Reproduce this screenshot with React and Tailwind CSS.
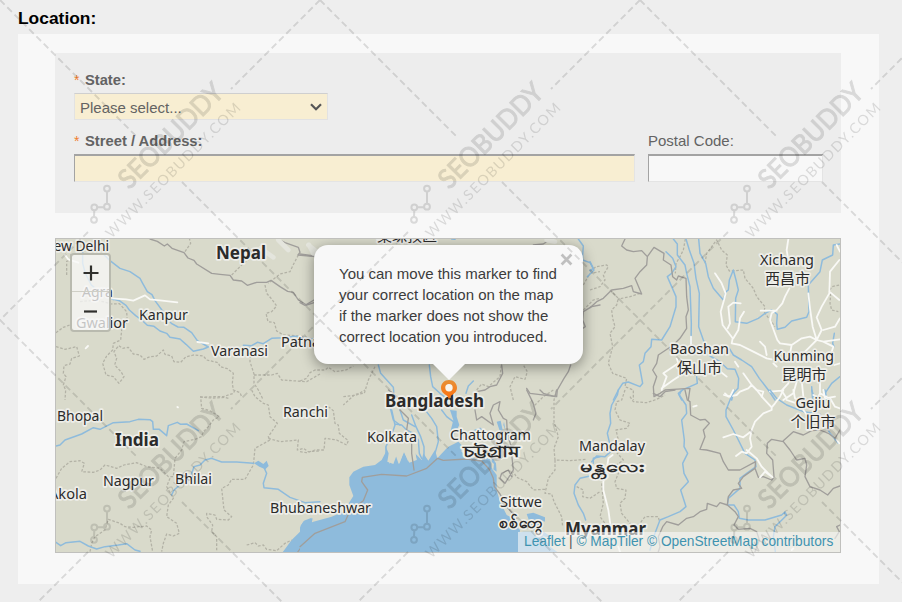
import React from "react";

const LABEL_FONT = '"Noto Sans", "Noto Sans CJK SC", sans-serif';

// [text, x, width, baseline, size, weight]
const LABELS = [
  ["New Delhi", 43, 66, 250.5, 15, 400],
  ["Agra", 82, 31, 297, 15, 400],
  ["Gwalior", 76, 52, 328, 15, 400],
  ["Kanpur", 139, 49, 320, 15, 400],
  ["Varanasi", 211, 57, 355.5, 15, 400],
  ["Patna", 281, 39, 347, 15, 400],
  ["Nepal", 216, 50, 258.5, 17.5, 700],
  ["Bhopal", 57, 46, 420.5, 15, 400],
  ["India", 115, 44, 446, 17.5, 700],
  ["Nagpur", 103, 51, 485.5, 15, 400],
  ["Bhilai", 175, 37, 483.5, 15, 400],
  ["Akola", 49, 38, 498.5, 15, 400],
  ["Ranchi", 283, 45, 417, 15, 400],
  ["Bhubaneshwar", 270, 101, 512.5, 15, 400],
  ["Kolkata", 367, 50, 441.5, 15, 400],
  ["Chattogram", 450, 81, 440.3, 15, 400],
  ["চট্টগ্রাম", 463, 56, 457, 15, 600],
  ["Bangladesh", 385, 99, 407, 17.5, 700],
  ["Sittwe", 500, 42, 506.8, 15, 400],
  ["စစ်တွေ", 499, 45, 528, 16, 600],
  ["Mandalay", 579, 66, 451.2, 15, 400],
  ["မန္တလေး", 580, 64, 472, 16, 600],
  ["Myanmar", 565, 81, 535, 17.5, 700],
  ["Xichang", 760, 54, 265, 15, 400],
  ["西昌市", 765, 45, 284, 15, 400],
  ["Baoshan", 670, 59, 353.5, 15, 400],
  ["保山市", 677, 45, 372.5, 15, 400],
  ["Kunming", 773.5, 60.5, 361, 15, 400],
  ["昆明市", 781.5, 45, 380, 15, 400],
  ["Gejiu", 795.5, 35, 408, 15, 400],
  ["个旧市", 790.5, 45, 427, 15, 400],
  ["桑珠孜区", 377, 60, 241, 15, 400],
];

const RIVER = "#8ebbdc";
const STATE = "#b3b2a6";
const BORDER = "#a09e9b";

// One sheet of the map, drawn on a grid three times finer than the page.
function Sheet({ x, y, water, rivers, states, borders, roads, wideRoads, children }) {
  return (
    <g
      transform={`translate(${x} ${y}) scale(0.33333)`}
      fill="none"
      strokeLinejoin="round"
      strokeLinecap="round"
    >
      {water && <path d={water} fill={RIVER} />}
      {children}
      {states && <path d={states} stroke={STATE} strokeWidth="3.8" strokeDasharray="8 5" strokeLinecap="butt" />}
      {rivers && <path d={rivers} stroke={RIVER} strokeWidth="4.4" />}
      {borders && <path d={borders} stroke={BORDER} strokeWidth="4" />}
      {roads && <path d={roads} stroke="#f9f9f6" strokeWidth="5.4" />}
      {wideRoads && <path d={wideRoads} stroke="#e4e5dd" strokeWidth="14" />}
    </g>
  );
}

function MapDrawing() {
  return (
    <svg className="block h-full w-full" viewBox="56 239 784 313">
      <rect x="56" y="239" width="784" height="313" fill="#d9dacb" />

      <Sheet
        x={50}
        y={230}
        rivers="M160 72 L180 92 L210 115 L240 125 L270 145 L278 160 L292 185 L306 194 L315 212 L340 246 L364 280 L384 291 L402 292 L425 308 L442 332 L475 351 M180 205 L208 212 L228 226 L238 240 L257 257 L275 270 L292 286 L312 289 L330 303 L350 310 L360 322 L390 327 L408 343 L430 364 L460 357 L475 351 M580 346 L605 347 L622 337 L640 341 L665 325 L700 323 L735 319 L790 327 M98 65 L98 100 L106 130 L124 165 L155 190 L190 209"
        states="M50 135 L50 94 L65 88 L62 70 M18 308 L40 292 L62 284 M90 215 L140 210 L185 222 L208 221 L230 245 L232 275 L215 300 L212 330 L190 340 L188 360 L170 378 L158 400 L168 435 L190 440 L207 460 L222 440 L213 425 L194 405 L200 385 L192 365 L206 347 L218 355 L235 352 L250 372 L270 375 L282 388 L300 380 L320 378 L340 360 L345 373 L365 378 L372 395 L392 397 L407 381 L430 375 L460 378 L470 390 L505 398 L510 410 L532 416 L550 430 L547 460 L550 480 L570 488 L575 500 M450 500 L470 503 L490 504 L525 502 L540 507 M18 350 L45 358 L80 350 L88 378 L65 385 L60 402 L42 407 L40 430 L48 440 L40 465 L47 480 L45 510 M600 350 L600 395 L612 432 L612 460 L625 480 L640 510 M612 435 L665 435 L682 430 L695 450 L770 455 L810 432 M645 165 L650 190 L665 207 L680 228 L665 245 L648 250 L654 275 L673 278 L680 303 L700 315 L735 317 L770 320 M545 135 L575 105 L600 85 L632 88 M405 65 L422 40 L418 25 M745 75 L732 100 L720 125 L690 132 L655 160"
        borders="M300 27 L322 34 L343 48 L352 42 L366 55 L402 68 L414 84 L432 91 L440 102 L485 130 L510 133 L540 136 L550 150 L575 153 L592 166 L620 157 L650 157 L663 151 L690 170 L713 184 L730 187 L745 210 L770 225 L792 218 M683 27 L705 38 L745 52 L750 67 L744 75 L795 80"
        roads="M185 205 L228 208 L250 212 L285 196 L300 208 L330 211 L382 217 M442 336 L475 340 M45 75 L55 88 L85 98 M107 355 L114 348"
        wideRoads="M632 55 L670 82 M685 30 L715 60 M775 45 L800 65"
      />

      <Sheet
        x={300}
        y={230}
        rivers="M235 405 L242 430 L280 472 L282 495 L270 530 L280 570 L300 585 M388 405 L392 440 L398 470 L420 490 L445 510 L460 525 M498 490 L505 468 L520 453 M835 27 L850 48 L848 75 L848 90 L870 98 L882 120 L862 140 M455 27 L465 28"
        states="M0 453 L20 445 L30 428 L45 420 L75 420 L85 412 L105 425 L138 420 L160 408 M225 410 L205 450 L193 490 L165 493 L130 525 M530 480 L545 462 L565 470 L600 440 L604 405 M640 510 L630 470 L645 440 L675 448 L682 425 L670 405 M760 480 L730 500 L700 530 M850 240 L880 210 L900 205 M850 165 L870 130 L900 125"
        borders="M0 218 L15 226 L42 210 M0 72 L42 78 M605 405 L608 430 L590 465 L570 470 L555 480 L530 485 L530 510 M680 475 L690 490 L770 500 L772 480 L792 445 L805 425 L812 405 M848 295 L856 290 L848 270 L850 245 L875 230 L900 225 M700 45 L730 42 L750 28"
        wideRoads="M27 45 L40 70 M740 30 L765 35"
      />

      <Sheet
        x={590}
        y={230}
        rivers="M250 27 L262 42 L262 75 L285 105 L290 130 L300 170 L304 280 L303 340 M288 27 L298 60 L312 100 L318 145 L328 190 L326 290 L340 330 L360 378 L390 395 L412 416 L435 418 L446 445 L444 475 L430 490 L425 510 M326 27 L330 70 L347 100 L355 140 L370 175 L400 210 L408 185 L415 180 L418 150 L430 120 L438 150 L445 180 L437 205 L436 275 L470 280 L505 265 L525 250 L545 240 L562 253 L560 280 L562 298 L585 292 L605 273 L650 262 L657 245 L655 165 L690 125 L697 90 L728 75 L730 45 L750 42 M228 65 L248 85 L258 110 L245 130 L232 140 L258 200 L258 230 L240 290 L215 330 L185 328 L183 350 L165 370 L160 395 L148 405 L158 460 L150 470 L115 456 L98 460 L85 480 L70 510 M418 355 L430 375 L455 390 L485 410 L508 445 L535 480 L555 510 M320 440 L322 460 L300 470 L280 478 L265 490 L275 510 M733 310 L728 340 L732 350 M665 470 L668 510 M750 440 L725 460 L705 490 L710 510 M0 95 L10 115 L0 122"
        states="M0 180 L30 170 L45 150 L40 135 L55 110 L50 105 L18 110 L0 125 M60 180 L85 205 L80 225 L65 240 L68 265 L75 290 L60 310 L68 350 L60 380 L55 400 L68 430 L110 445 L105 470 L130 480 L130 510 M150 190 L120 200 L85 207 M286 27 L280 60 L270 80 L258 100 L256 130 M345 100 L350 70 L380 30 L395 60 L412 75 L408 105 L418 123 L460 120 L465 145 L490 175 L500 200 L525 230 L522 245 L540 270 L555 290 M720 180 L725 170 L748 165 M722 190 L720 220 L725 240 L745 245"
        borders="M105 27 L95 48 L110 60 L130 65 L155 62 L172 80 L192 52 L222 70 L220 90 L243 105 L248 140 L260 150 L265 138 L288 145 L290 200 L295 240 L288 260 L290 295 L270 325 L250 345 L205 375 L200 400 L188 420 L200 440 L190 470 L192 500 L210 490 L225 480 L250 478 L300 475 L295 510 M172 82 L170 105 L150 125 L135 145 L155 192 L130 185 L125 167 L100 175 L65 180 L40 205 L20 215 L0 233"
        roads="M595 27 L590 60 L595 90 M598 175 L585 200 L577 220 L560 240 L545 250 L540 270 L562 330 L570 340 L605 345 L635 325 L660 320 L680 330 L700 335 L750 328 M512 242 L560 242 M375 130 L395 160 L407 190 L402 210 L392 245 L398 285 L428 325 L425 340 L450 345 L490 365 L530 385 L545 388 M462 245 L450 265 L445 300 L430 325 M452 220 L430 218 L415 230 L420 280 L413 295 M510 335 L525 350 L530 375 M655 190 L660 235 L668 290 L680 330 M740 45 L750 65 M748 90 L720 125 L718 190 L695 230 L680 262 L695 300 L680 330 M718 185 L748 210 M750 265 L735 290 L700 300 M750 400 L733 405 M605 345 L600 370 M680 330 L655 355 L640 370 M700 335 L730 350 L725 365 M560 410 L550 400 M303 320 L303 345 M215 480 L230 440 L220 430 L265 400 L260 385 M215 475 L250 450 L265 440 M385 420 L410 440 M435 395 L445 410 M460 430 L485 465 L475 475 L450 485 L440 495 L415 500 L405 490 M485 465 L500 480 L520 485 L515 500 M540 485 L575 482 L595 460 L600 440 M575 482 L590 505 M635 450 L640 500 M620 455 L610 490 L580 510 M690 455 L690 490 L680 510 M690 490 L710 500"
      />

      <Sheet
        x={50}
        y={390}
        water="M697 488 L725 450 L750 425 L775 407 L810 398 L810 488 Z M752 408 L762 392 L785 383 L782 400 Z M612 220 L625 212 L640 222 L650 212 L656 228 L646 238 L628 230 Z"
        rivers="M18 168 L30 165 L45 150 L95 132 L130 113 L150 118 L190 98 L240 95 L265 88 L300 89 L308 95 L310 118 L328 118 L350 137 L355 107 L382 97 L392 103 L410 102 L445 122 M365 315 L372 300 L395 280 L420 265 L432 230 L450 225 L465 210 L485 205 L515 216 L560 216 L610 220 M640 228 L650 250 L640 280 L642 293 L685 298 L720 322 L765 338 L810 335 M18 457 L32 467 L48 458 L90 454 L115 468 L140 477 L165 470 L205 465 L230 461 L255 480 L270 484"
        states="M18 265 L35 235 L60 215 L90 212 L103 220 L95 245 L130 247 L150 240 L165 225 L200 235 L222 225 L260 218 L290 230 L330 235 L355 260 L370 260 L375 205 L395 180 L402 155 L435 148 L455 140 L460 125 L475 110 L490 90 L508 80 L480 62 L455 55 L452 22 L490 20 L520 20 L550 10 L555 0 M360 265 L350 290 L370 325 L355 345 L350 380 L380 400 L388 430 L370 438 L350 432 L340 460 L335 485 M605 0 L615 20 L640 40 L655 45 L660 80 L682 100 L655 140 L660 150 L615 175 L610 225 L585 268 L545 268 L535 285 L515 295 L522 360 L545 380 L535 390 L500 388 L495 375 L470 370 L470 380 L488 405 L485 425 L500 440 L500 485 M655 145 L690 155 L745 150 L742 180 L760 175 L775 185 L810 183 M120 485 L125 460 L135 440 L165 420 L175 388 L210 400 L225 410 L250 412 L290 408 L305 420 L300 440 L308 485 M590 465 L615 458 L625 468 L640 465 L650 478 L680 482 L705 460 L725 450"
        roads="M382 51 L384 52"
      >
        <path d="M743 486 L770 450 L810 420" stroke={BORDER} strokeWidth="3.6" />
      </Sheet>

      <Sheet
        x={300}
        y={390}
        water="M0 488 L0 412 L40 395 L95 380 L130 365 L160 318 L148 285 L148 262 L160 245 L190 230 L225 225 L245 210 L258 185 L255 165 L266 190 L262 215 L280 222 L292 190 L298 222 L312 185 L325 215 L330 195 L350 210 L345 190 L365 210 L370 190 L385 212 L405 180 L412 205 L440 175 L480 180 L500 200 L540 210 L555 200 L570 205 L575 235 L590 255 L590 300 L600 335 L620 375 L640 385 L650 410 L660 420 L655 488 Z M0 410 L10 395 L38 385 L35 400 L15 410 Z M450 60 L470 62 L470 80 L478 105 L462 135 L450 130 L460 90 Z M425 210 L445 170 L475 155 L490 170 L475 200 Z M575 200 L588 220 L590 245 L575 235 Z M590 95 L600 125 L610 130 L602 92 Z M610 105 L616 120 L612 95 Z M680 372 L700 368 L735 382 L735 395 L720 390 L715 415 L760 445 L735 440 L700 420 L690 400 Z M670 425 L720 425 L750 470 L775 488 L655 488 L655 428 Z"
        rivers="M275 60 L285 105 L280 120 L270 140 L258 170 L258 190 M285 102 L305 105 L320 120 L340 130 L355 150 L358 190 L365 205 M300 60 L310 90 L345 110 M335 75 L348 110 L362 140 L372 170 L372 200 M372 55 L395 85 L410 110 L415 155 L405 190 M425 60 L440 80 L460 95 M500 130 L540 115 L555 130 L580 145 M600 150 L580 180 M900 200 L880 205 L880 220 M900 255 L870 258 L840 265 L825 285 L822 310 L835 345 L850 370 L857 390"
        states="M85 50 L100 62 L105 100 L115 105 L118 130 L145 152 L140 165 L110 150 L75 145 L72 180 L45 180 L20 188 L0 185 M130 20 L170 15 L195 0 M770 0 L762 30 L762 95 L775 140 L762 175 L765 210 L810 212 L860 208 M765 210 L765 240 L745 265 L735 310 L755 312 L762 335 L785 380 L788 410 M735 298 L700 300 L680 275 L650 262 L640 245 M830 290 L850 300 L848 320 L870 325 L900 305"
        borders="M265 0 L280 10 M300 60 L325 85 L320 120 L335 150 L335 190 L342 240 M0 470 L45 430 L135 395 L150 362 L190 332 L203 300 L185 275 L187 262 L245 253 L320 258 L380 235 L413 205 L430 211 L500 207 L545 213 L568 238 L580 265 L583 290 L600 312 L620 350 L650 385 M525 60 L530 90 L545 80 L580 105 L570 70 L580 45 L600 35 L595 60 L610 85 L620 90 L622 130 L632 165 L640 240 L615 280 L600 265 L605 250 L625 240 L635 260 M680 0 L690 20 L700 40 L708 70 L700 90 M770 0 L765 20 L730 10 L720 0"
      >
        <path d="M575 215 L582 222 L580 240 L574 232 Z M268 222 L285 190 L296 222 L312 185 L328 218 L350 210 L345 180 L365 140 L300 130 L268 170 Z" fill="#d9dacb" />
      </Sheet>

      <Sheet
        x={590}
        y={390}
        rivers="M85 0 L82 15 L65 45 L60 70 L62 100 L52 130 L60 165 L62 185 L45 200 L20 198 L5 215 M275 0 L268 15 L288 45 L290 70 L275 90 L283 150 L282 170 L293 190 L278 220 L282 250 L295 275 L272 300 L288 350 L270 365 L235 380 L210 390 L195 430 L180 480 M432 0 L420 30 L408 60 L408 80 L430 120 L445 150 L465 190 L495 210 L498 230 L470 250 L450 265 L450 295 L415 325 L412 345 L432 345 L445 365 L448 385 L475 390 L525 390 L575 375 L585 366 L590 376 L555 410 L550 440 L556 485 M540 0 L560 25 L590 45 L640 65 L690 72 L720 130 L745 160 M665 0 L672 20 M705 0 L708 15"
        states="M105 0 L95 30 L80 35 L75 60 L90 90 L120 100 L110 115 L78 120 L85 150 L75 160 L78 185 L100 210 L80 225 L85 250 L75 275 L80 295 L108 300 L105 325 L90 340 L95 370 L120 400 L125 425 M35 280 L40 340 L30 380 L45 400 L50 430 L55 450 M120 20 L130 35 L170 38 L200 28 L225 15 M125 425 L150 400 L165 380 L205 380 L208 395"
        borders="M190 10 L210 20 L225 5 L255 0 M285 0 L292 30 L300 35 L302 75 L330 90 L345 88 L358 100 L340 120 L345 140 L330 178 L350 180 L390 190 L400 215 L415 240 L450 240 L497 215 L495 235 L505 262 L520 260 L545 270 L552 260 L548 210 L530 190 L532 160 L545 148 L580 155 L600 180 L620 210 L645 205 L650 225 L645 260 L660 290 L690 300 L713 315 L730 295 L750 288 M580 152 L610 125 L640 135 L665 122 L690 120 L715 130 L735 145 L750 120 M495 235 L460 260 L445 280 L455 295 L430 300 L415 320 L412 345 L390 338 L380 350 L352 340 L350 358 L330 365 L310 380 L290 385 L265 405 L230 395 L218 410 L205 440 L210 470 L205 485 M412 345 L435 365 L445 380 L432 405 L445 418 L480 415 L500 425 L508 450 L495 485 M750 405 L740 410 L748 425 L735 445"
        roads="M500 0 L520 25 L545 52 L545 60 L520 70 L495 95 L485 120 L480 145 L485 170 L470 190 L455 185 L438 198 M482 125 L460 142 L430 132 L400 142 M470 180 L500 205 L515 230 L535 250 L548 262 L525 245 L510 262 M402 15 L420 20 L430 0 M580 0 L570 20 L555 40 L545 52 M590 30 L620 40 M610 0 L615 25 L640 38 M670 15 L690 25 M720 25 L735 50 L750 55 M640 60 L655 80 L660 100 M740 150 L748 160 M310 50 L320 47 M68 195 L55 205 L50 240 L40 275 L40 300 L55 360 L62 410 M85 470 L90 485 M605 480 L610 475 M700 0 L705 25 L735 20"
      />

      <g fontFamily={LABEL_FONT} fill="#2b2b2b">
        {LABELS.map(([text, x, width, y, size, weight]) => (
          <text
            key={text}
            x={x}
            y={y}
            fontSize={size}
            fontWeight={weight}
            textLength={width}
            lengthAdjust="spacingAndGlyphs"
            stroke="#eeeee9"
            strokeWidth="3.4"
            strokeLinejoin="round"
            paintOrder="stroke"
          >
            {text}
          </text>
        ))}
      </g>
    </svg>
  );
}

function MarkerPin() {
  return (
    <svg className="absolute left-[384px] top-[140px]" width="18" height="23" viewBox="0 0 18 23">
      <defs>
        <linearGradient id="pin" x1="0" y1="0" x2="0" y2="1">
          <stop offset="0" stopColor="#e69138" />
          <stop offset="1" stopColor="#ff6f0c" />
        </linearGradient>
      </defs>
      <path d="M9 1 C4.4 1 1 4.4 1 8.8 C1 12.6 3.6 14.6 6 16 C7.4 17 8.2 18.4 9 20.4 C9.8 18.4 10.6 17 12 16 C14.4 14.6 17 12.6 17 8.8 C17 4.4 13.6 1 9 1 Z" fill="url(#pin)" />
      <circle cx="9" cy="8.8" r="3.7" fill="#f8f5ee" />
    </svg>
  );
}

function Popup() {
  return (
    <div className="absolute left-[258px] top-[6px] w-[269px]">
      <div className="h-[119px] rounded-[14px] bg-[#f8f8f8] pl-[25px] pt-[18px] text-[15px] leading-[21px] text-[#3c3c3c] shadow-[0_3px_14px_rgba(0,0,0,0.4)]">
        <p className="whitespace-nowrap">You can move this marker to find</p>
        <p className="whitespace-nowrap">your correct location on the map</p>
        <p className="whitespace-nowrap">if the marker does not show the</p>
        <p className="whitespace-nowrap">correct location you introduced.</p>
      </div>
      <svg className="absolute left-[246px] top-[8px]" width="13" height="13" viewBox="0 0 13 13">
        <path d="M1.6 1.6 L11.4 11.4 M11.4 1.6 L1.6 11.4" stroke="#c0c0c0" strokeWidth="2.8" />
      </svg>
      <svg className="absolute left-[119px] top-[119px]" width="32" height="17" viewBox="0 0 32 17">
        <path d="M0 0 H32 L16 16 Z" fill="#f8f8f8" />
      </svg>
    </div>
  );
}

function ZoomControl() {
  return (
    <div className="absolute left-[14px] top-[14px] flex h-[79px] w-[41px] flex-col rounded-[4px] border-2 border-[#b9baaf] bg-[#f8f8f8]/75">
      <div className="flex h-[37px] items-center justify-center border-b border-[#cfcfc6]">
        <svg width="16" height="16" viewBox="0 0 16 16">
          <path d="M8 0.5 V15.5 M0.5 8 H15.5" stroke="#30302c" strokeWidth="2.2" />
        </svg>
      </div>
      <div className="flex h-[38px] items-center justify-center">
        <svg width="13" height="3" viewBox="0 0 13 3">
          <path d="M0 1.5 H13" stroke="#30302c" strokeWidth="2.2" />
        </svg>
      </div>
    </div>
  );
}

function Watermark() {
  return (
    <svg className="pointer-events-none absolute inset-0" width="902" height="602" viewBox="0 0 902 602">
      <defs>
        <g id="mark" fill="none" stroke="#000" strokeWidth="1.9">
          <path d="M0 0 L138 138 M182 182 L320 320 M320 0 L231 89 M88 232 L0 320" strokeDasharray="6.5 3.8" />
          <path d="M94 216.8 L94.3 210.4 M97.4 207.2 H103.9 M107 203.6 V191.8" strokeWidth="2" />
          <circle cx="94" cy="219.8" r="2.9" strokeWidth="2" />
          <circle cx="94.3" cy="207.3" r="2.9" strokeWidth="2" />
          <circle cx="107" cy="206.7" r="2.9" strokeWidth="2" />
          <circle cx="107" cy="188.6" r="2.9" strokeWidth="2" />
          <g fill="#000" stroke="none" fontFamily="Lato, sans-serif">
            <text
              transform="translate(129.3 190.2) rotate(-45)"
              fontSize="27"
              textLength="136"
              lengthAdjust="spacingAndGlyphs"
              stroke="#000"
              strokeWidth="1"
            >
              SEOBUDDY
            </text>
            <text transform="translate(111.5 239) rotate(-45)" fontSize="14.5" textLength="184">
              WWW.SEOBUDDY.COM
            </text>
          </g>
        </g>
      </defs>
      <g opacity="0.125">
        <use href="#mark" />
        <use href="#mark" x="320" />
        <use href="#mark" x="640" />
        <use href="#mark" y="320" />
        <use href="#mark" x="320" y="320" />
        <use href="#mark" x="640" y="320" />
      </g>
    </svg>
  );
}

function Star() {
  return <span className="w-[11px] text-[14px] font-normal text-[#f08030]">*</span>;
}

export default function App() {
  return (
    <div className="relative h-[602px] w-[902px] overflow-hidden bg-[#eeeeee] px-[18px] pt-[7px] font-['Liberation_Sans',Arial,sans-serif] text-[#636363]">
      <h1 className="h-[27px] text-[17.4px] font-bold leading-[22px] text-black">Location:</h1>
      <main className="h-[550px] w-[861px] bg-[#f8f8f8] px-[37px] pt-[19px]">
        <section className="h-[160px] w-[786px] bg-[#ededed] pl-[19px] pt-[15px] text-[15px]">
          <div className="flex h-[25px] items-start pt-[2px] text-[14.7px] font-bold leading-[20px]">
            <Star />
            State:
          </div>
          <div className="flex h-[27px] w-[254px] items-center justify-between border border-[#e2e2e2] border-t-[#cfcfcf] bg-[#f8eed2] pl-[5px] pr-[5px]">
            <span className="pt-[2px] leading-[20px]">Please select...</span>
            <svg width="12" height="8" viewBox="0 0 12 8">
              <path d="M1 1.2 L6 6.2 L11 1.2" fill="none" stroke="#555" strokeWidth="2.2" />
            </svg>
          </div>
          <div className="mt-[10px] flex gap-[13px]">
            <div className="w-[561px]">
              <div className="flex h-[24px] items-start pt-px text-[14.75px] font-bold leading-[20px]">
                <Star />
                Street / Address:
              </div>
              <div className="h-[28px] border border-t-2 border-[#e4e4e4] border-l-[#a3a3a3] border-t-[#a3a3a3] bg-[#f8eed2]" />
            </div>
            <div className="w-[175px]">
              <div className="flex h-[24px] items-start pt-px leading-[20px]">Postal Code:</div>
              <div className="h-[28px] border border-t-2 border-[#e4e4e4] border-l-[#a3a3a3] border-t-[#a3a3a3] bg-[#f8f8f8]" />
            </div>
          </div>
        </section>

        <section className="relative mt-[25px] h-[315px] w-[786px] overflow-hidden border border-[#c0c0bd]">
          <MapDrawing />
          <MarkerPin />
          <Popup />
          <ZoomControl />
          <div className="absolute bottom-0 right-0 h-[20px] w-[322px] whitespace-nowrap bg-[#f8f8f8]/60 pl-[6px] text-[13.72px] leading-[19px] text-[#3f93b0]">
            Leaflet <span className="text-[#555]">|</span> © MapTiler © OpenStreetMap contributors
          </div>
        </section>
      </main>
      <Watermark />
    </div>
  );
}
